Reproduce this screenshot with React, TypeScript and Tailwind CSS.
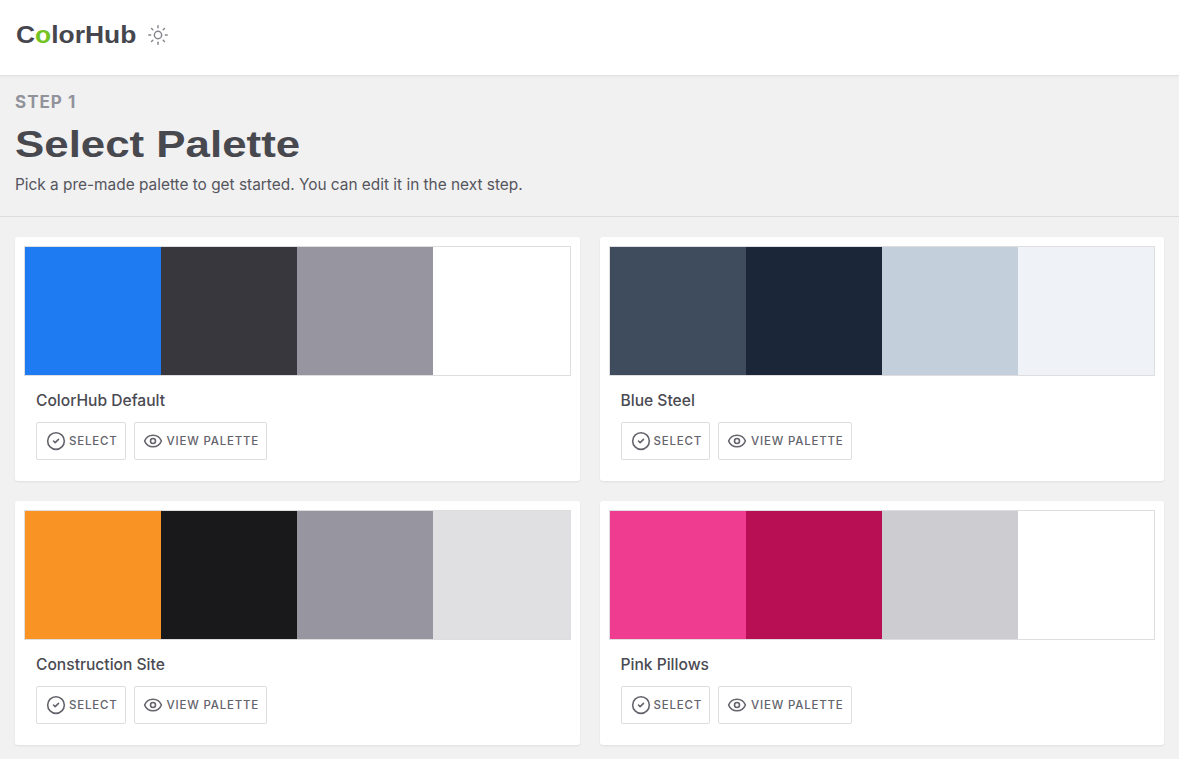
import { CircleCheck, Eye, Sun } from "lucide-react";

const palettes = [
  { name: "ColorHub Default", colors: ["#1f7bf2", "#38373d", "#9796a0", "#ffffff"] },
  { name: "Blue Steel", colors: ["#3e4c5e", "#1b2638", "#c3cfdb", "#eff3f7"] },
  { name: "Construction Site", colors: ["#f99324", "#19191b", "#9796a0", "#e0e0e3"] },
  { name: "Pink Pillows", colors: ["#f03c90", "#b80f54", "#cdccd1", "#ffffff"] },
];

function PaletteCard({ name, colors }: { name: string; colors: string[] }) {
  return (
    <div className="h-[244px] rounded-[3px] bg-white p-[9px] shadow-[0_1px_2px_rgba(0,0,0,0.08)]">
      <div className="flex h-[130px] border border-[#dedee0]">
        {colors.map((color, i) => (
          <div key={i} className="h-full flex-1" style={{ backgroundColor: color }} />
        ))}
      </div>
      <div className="px-[12px]">
        <div className="mt-[15px] text-[15.6px] leading-[20px] font-[550] text-[#4a4a52]">{name}</div>
        <div className="mt-[11px] flex gap-2">
          <button className="flex h-[38px] items-center gap-[3px] rounded-[2px] border border-[#dedee0] pr-[7px] pl-[9px] text-[11.5px] font-medium tracking-[0.07em] text-[#63636b]">
            <CircleCheck size={20} strokeWidth={1.9} />
            <span className="pt-px">SELECT</span>
          </button>
          <button className="flex h-[38px] items-center gap-[4px] rounded-[2px] border border-[#dedee0] pr-[7px] pl-[8px] text-[11.5px] font-medium tracking-[0.07em] text-[#63636b]">
            <Eye size={20} strokeWidth={1.9} />
            <span className="pt-px">VIEW PALETTE</span>
          </button>
        </div>
      </div>
    </div>
  );
}

export default function App() {
  return (
    <div className="min-h-[759px] overflow-hidden bg-[#f1f1f1] font-['Inter',sans-serif]">
      <header className="flex h-[76px] items-center gap-[11px] border-b border-[#e2e2e2] bg-white pb-[6px] pl-[16px] shadow-[0_1px_2px_rgba(0,0,0,0.04)]">
        <div className="w-[120px] origin-left scale-x-[1.1] font-['Liberation_Sans',sans-serif] text-[24px] font-bold text-[#45464e]">
          C<span className="text-[#73c322]">o</span>lorHub
        </div>
        <Sun size={22} strokeWidth={1.6} className="text-[#85858e]" />
      </header>
      <div className="h-[141px] border-b border-[#dddddd] pt-[15px] pl-[15px]">
        <div className="text-[17px] leading-[22px] font-bold tracking-[0.06em] text-[#92929b]">STEP 1</div>
        <h1 className="mt-[10px] w-fit origin-left scale-x-[1.185] font-['Liberation_Sans',sans-serif] text-[37px] leading-[44px] font-bold text-[#48484f]">
          Select Palette
        </h1>
        <p className="mt-[8px] text-[15.4px] leading-[20px] text-[#55555d]">
          Pick a pre-made palette to get started. You can edit it in the next step.
        </p>
      </div>
      <div className="grid grid-cols-2 gap-x-[20px] gap-y-[20px] pt-[20px] pr-[15px] pl-[15px]">
        {palettes.map((palette) => (
          <PaletteCard key={palette.name} name={palette.name} colors={palette.colors} />
        ))}
      </div>
    </div>
  );
}
